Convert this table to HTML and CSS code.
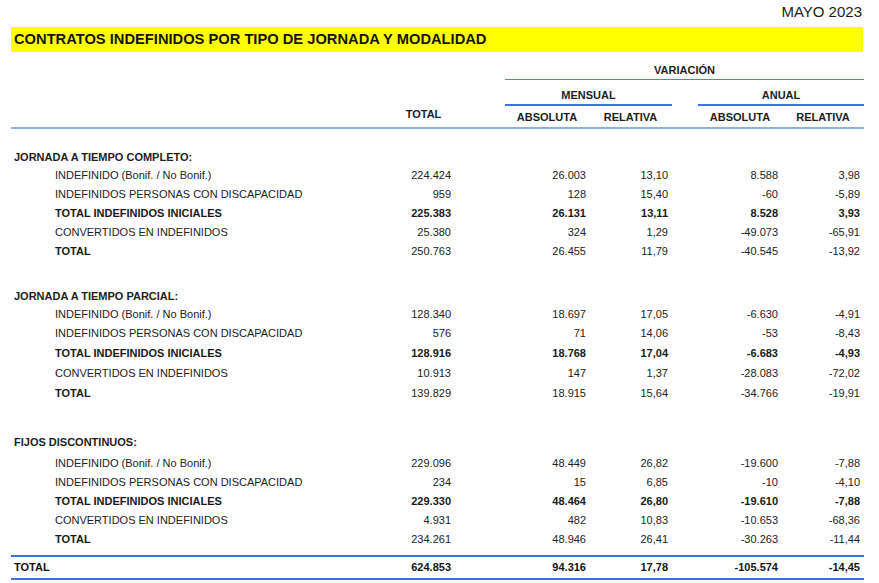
FILE: index.html
```html
<!DOCTYPE html>
<html lang="es">
<head>
<meta charset="utf-8">
<title>Contratos indefinidos por tipo de jornada y modalidad</title>
<link rel="stylesheet" href="styles.css">
</head>
<body>
<div class="date">MAYO 2023</div>
<div class="title">CONTRATOS INDEFINIDOS POR TIPO DE JORNADA Y MODALIDAD</div>

<div class="table">
  <div class="head">
    <div class="h-total">TOTAL</div>
    <div class="h-var">VARIACIÓN</div>
    <div class="h-men">MENSUAL</div>
    <div class="h-anu">ANUAL</div>
    <div class="h-c4">ABSOLUTA</div>
    <div class="h-c5">RELATIVA</div>
    <div class="h-c7">ABSOLUTA</div>
    <div class="h-c8">RELATIVA</div>
  </div>

  <section class="sec s1">
    <div class="sec-title">JORNADA A TIEMPO COMPLETO:</div>
    <div class="row"><span class="lbl">INDEFINIDO (Bonif. / No Bonif.)</span><span>224.424</span><span>26.003</span><span>13,10</span><span>8.588</span><span>3,98</span></div>
    <div class="row"><span class="lbl">INDEFINIDOS PERSONAS CON DISCAPACIDAD</span><span>959</span><span>128</span><span>15,40</span><span>-60</span><span>-5,89</span></div>
    <div class="row bold"><span class="lbl">TOTAL INDEFINIDOS INICIALES</span><span>225.383</span><span>26.131</span><span>13,11</span><span>8.528</span><span>3,93</span></div>
    <div class="row"><span class="lbl">CONVERTIDOS EN INDEFINIDOS</span><span>25.380</span><span>324</span><span>1,29</span><span>-49.073</span><span>-65,91</span></div>
    <div class="row"><span class="lbl b">TOTAL</span><span>250.763</span><span>26.455</span><span>11,79</span><span>-40.545</span><span>-13,92</span></div>
  </section>

  <section class="sec s2">
    <div class="sec-title">JORNADA A TIEMPO PARCIAL:</div>
    <div class="row"><span class="lbl">INDEFINIDO (Bonif. / No Bonif.)</span><span>128.340</span><span>18.697</span><span>17,05</span><span>-6.630</span><span>-4,91</span></div>
    <div class="row"><span class="lbl">INDEFINIDOS PERSONAS CON DISCAPACIDAD</span><span>576</span><span>71</span><span>14,06</span><span>-53</span><span>-8,43</span></div>
    <div class="row bold h20"><span class="lbl">TOTAL INDEFINIDOS INICIALES</span><span>128.916</span><span>18.768</span><span>17,04</span><span>-6.683</span><span>-4,93</span></div>
    <div class="row h21"><span class="lbl">CONVERTIDOS EN INDEFINIDOS</span><span>10.913</span><span>147</span><span>1,37</span><span>-28.083</span><span>-72,02</span></div>
    <div class="row"><span class="lbl b">TOTAL</span><span>139.829</span><span>18.915</span><span>15,64</span><span>-34.766</span><span>-19,91</span></div>
  </section>

  <section class="sec s3">
    <div class="sec-title tall">FIJOS DISCONTINUOS:</div>
    <div class="row"><span class="lbl">INDEFINIDO (Bonif. / No Bonif.)</span><span>229.096</span><span>48.449</span><span>26,82</span><span>-19.600</span><span>-7,88</span></div>
    <div class="row"><span class="lbl">INDEFINIDOS PERSONAS CON DISCAPACIDAD</span><span>234</span><span>15</span><span>6,85</span><span>-10</span><span>-4,10</span></div>
    <div class="row bold"><span class="lbl">TOTAL INDEFINIDOS INICIALES</span><span>229.330</span><span>48.464</span><span>26,80</span><span>-19.610</span><span>-7,88</span></div>
    <div class="row"><span class="lbl">CONVERTIDOS EN INDEFINIDOS</span><span>4.931</span><span>482</span><span>10,83</span><span>-10.653</span><span>-68,36</span></div>
    <div class="row"><span class="lbl b">TOTAL</span><span>234.261</span><span>48.946</span><span>26,41</span><span>-30.263</span><span>-11,44</span></div>
  </section>

  <div class="row grand"><span class="lbl">TOTAL</span><span>624.853</span><span>94.316</span><span>17,78</span><span>-105.574</span><span>-14,45</span></div>
</div>
</body>
</html>
```
FILE: styles.css
```css
html, body {
  margin: 0;
  padding: 0;
  background: #ffffff;
}
body {
  font-family: "Liberation Sans", Arial, sans-serif;
  color: #222222;
  width: 879px;
}
.date {
  height: 24px;
  line-height: 24px;
  font-size: 15px;
  text-align: right;
  padding-right: 17px;
  color: #1c1c1c;
}
.title {
  margin: 3px 0 0 11px;
  width: 849px;
  height: 25px;
  line-height: 25px;
  background: #ffff00;
  font-size: 14.7px;
  font-weight: bold;
  padding-left: 3px;
  color: #151515;
  white-space: nowrap;
}
.table {
  margin-left: 11px;
  width: 853px;
  font-size: 11px;
}
.head {
  display: grid;
  grid-template-columns: 370px 85px 39px 84px 83px 26px 84px 82px;
  border-bottom: 2px solid #8cafe8;
  font-weight: bold;
  text-align: center;
  line-height: 18px;
  color: #1e1e1e;
}
.h-total {
  grid-column: 2;
  grid-row: 1 / 4;
  align-self: end;
  padding-bottom: 4px;
}
.h-var {
  grid-column: 4 / 9;
  grid-row: 1;
  padding-top: 9px;
  border-bottom: 1px solid #4d84dd;
}
.h-men, .h-anu {
  grid-row: 2;
  padding-top: 6px;
  border-bottom: 2px solid #3d76da;
}
.h-men { grid-column: 4 / 6; }
.h-anu { grid-column: 7 / 9; }
.h-c4, .h-c5, .h-c7, .h-c8 {
  grid-row: 3;
  padding-top: 2px;
  padding-bottom: 1px;
}
.h-c4 { grid-column: 4; }
.h-c5 { grid-column: 5; }
.h-c7 { grid-column: 7; }
.h-c8 { grid-column: 8; }

.sec-title {
  height: 18px;
  line-height: 18px;
  font-weight: bold;
  padding-left: 3px;
  color: #1e1e1e;
}
.sec-title.tall { height: 21px; }
.s1 { margin-top: 19px; }
.s2 { margin-top: 26px; }
.s3 { margin-top: 30px; }

.row {
  display: grid;
  grid-template-columns: 366px 74px 135px 82px 110px 82px;
  height: 19px;
  line-height: 19px;
  text-align: right;
  white-space: nowrap;
}
.row.h20 { height: 20px; line-height: 20px; }
.row.h21 { height: 21px; line-height: 21px; }
.row .lbl {
  text-align: left;
  padding-left: 44px;
}
.row.bold, .row .b {
  font-weight: bold;
  color: #1a1a1a;
}
.grand {
  margin-top: 6px;
  height: 21px;
  line-height: 21px;
  border-top: 2px solid #3a74d9;
  border-bottom: 2px solid #3a74d9;
  font-weight: bold;
  color: #141414;
}
.grand .lbl {
  padding-left: 3px;
}
```
